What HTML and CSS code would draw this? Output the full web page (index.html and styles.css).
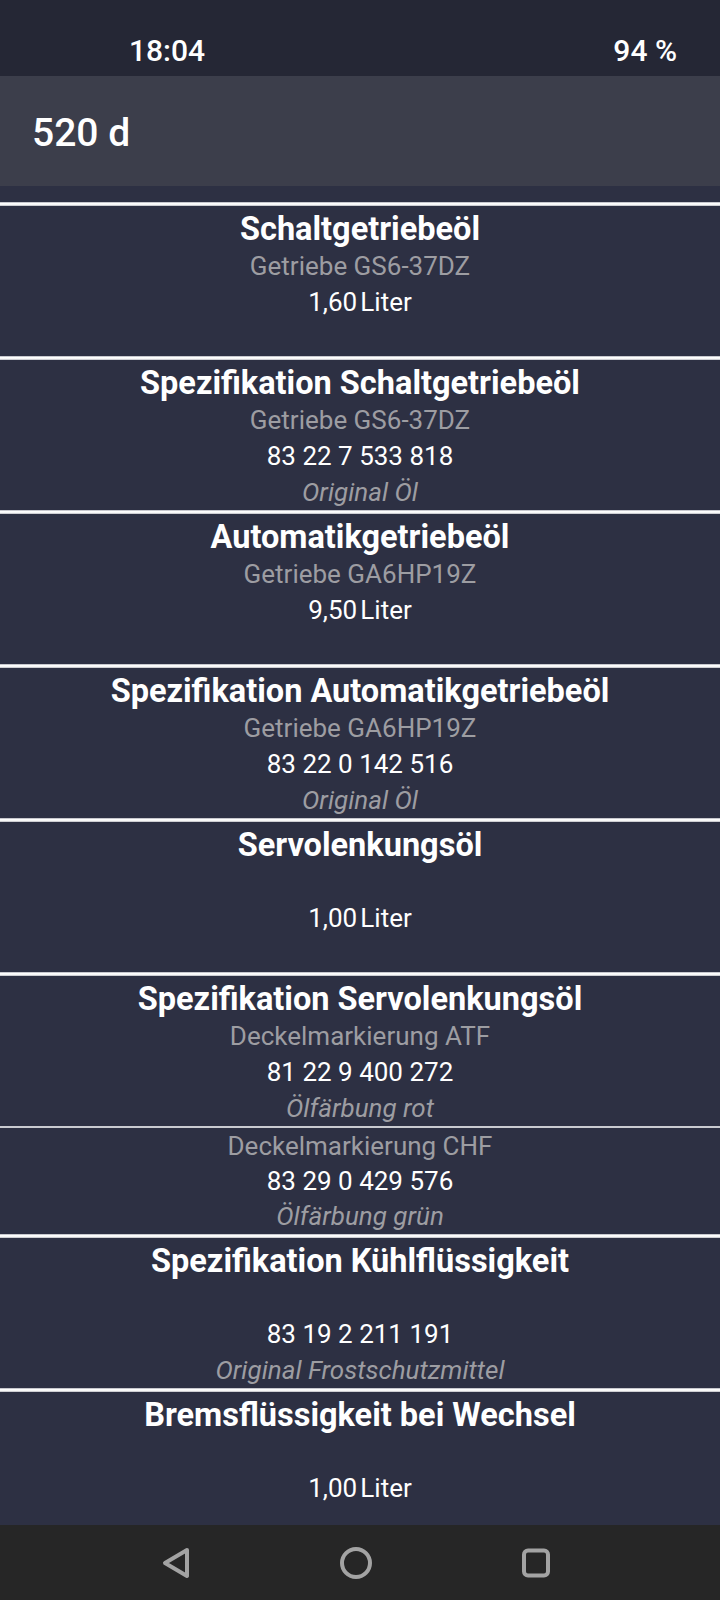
FILE: index.html
```html
<!DOCTYPE html>
<html lang="de">
<head>
    <meta charset="UTF-8">
    <meta name="viewport" content="width=device-width, initial-scale=1.0">
    <title>520 d</title>
    <link rel="stylesheet" href="styles.css">
</head>
<body>
    <div class="statusbar">
        <span class="time">18:04</span>
        <span class="battery">94 %</span>
    </div>
    <div class="appbar">520 d</div>

    <div class="content">
        <div class="sep"></div>
        <div class="card">
            <div class="title">Schaltgetriebeöl</div>
            <div class="sub">Getriebe GS6-37DZ</div>
            <div class="value">1,60&#8239;Liter</div>
            <div class="note"></div>
        </div>
        <div class="sep"></div>
        <div class="card">
            <div class="title">Spezifikation Schaltgetriebeöl</div>
            <div class="sub">Getriebe GS6-37DZ</div>
            <div class="value">83 22 7 533 818</div>
            <div class="note">Original Öl</div>
        </div>
        <div class="sep"></div>
        <div class="card">
            <div class="title">Automatikgetriebeöl</div>
            <div class="sub">Getriebe GA6HP19Z</div>
            <div class="value">9,50&#8239;Liter</div>
            <div class="note"></div>
        </div>
        <div class="sep"></div>
        <div class="card">
            <div class="title">Spezifikation Automatikgetriebeöl</div>
            <div class="sub">Getriebe GA6HP19Z</div>
            <div class="value">83 22 0 142 516</div>
            <div class="note">Original Öl</div>
        </div>
        <div class="sep"></div>
        <div class="card">
            <div class="title">Servolenkungsöl</div>
            <div class="sub"></div>
            <div class="value">1,00&#8239;Liter</div>
            <div class="note"></div>
        </div>
        <div class="sep"></div>
        <div class="card">
            <div class="title">Spezifikation Servolenkungsöl</div>
            <div class="sub">Deckelmarkierung ATF</div>
            <div class="value">81 22 9 400 272</div>
            <div class="note">Ölfärbung rot</div>
        </div>
        <div class="sep thin"></div>
        <div class="card subcard">
            <div class="sub">Deckelmarkierung CHF</div>
            <div class="value">83 29 0 429 576</div>
            <div class="note">Ölfärbung grün</div>
        </div>
        <div class="sep"></div>
        <div class="card">
            <div class="title">Spezifikation Kühlflüssigkeit</div>
            <div class="sub"></div>
            <div class="value">83 19 2 211 191</div>
            <div class="note">Original Frostschutzmittel</div>
        </div>
        <div class="sep"></div>
        <div class="card">
            <div class="title">Bremsflüssigkeit bei Wechsel</div>
            <div class="sub"></div>
            <div class="value">1,00&#8239;Liter</div>
            <div class="note"></div>
        </div>
    </div>

    <div class="navbar">
        <svg width="34" height="34" viewBox="0 0 34 34">
            <path d="M28 4 L6 17 L28 30 Z" fill="none" stroke="#a3a3a3" stroke-width="4" stroke-linejoin="round"/>
        </svg>
        <svg width="34" height="34" viewBox="0 0 34 34">
            <circle cx="17" cy="17" r="14" fill="none" stroke="#a3a3a3" stroke-width="4"/>
        </svg>
        <svg width="34" height="34" viewBox="0 0 34 34">
            <rect x="5" y="4.5" width="24" height="25" rx="4" fill="none" stroke="#a3a3a3" stroke-width="4"/>
        </svg>
    </div>
</body>
</html>
```

FILE: styles.css
```css
body {
    margin: 0;
    width: 720px;
    height: 1600px;
    overflow: hidden;
    font-family: Roboto, "Noto Sans", sans-serif;
    background-color: #2d3043;
    color: white;
    display: flex;
    flex-direction: column;
}
.statusbar {
    height: 76px;
    box-sizing: border-box;
    padding: 24px 43px 0 129px;
    background-color: #252735;
    display: flex;
    align-items: center;
    justify-content: space-between;
    font-size: 30px;
    font-weight: 500;
}
.appbar {
    height: 110px;
    box-sizing: border-box;
    padding: 3px 0 0 32px;
    background-color: #3c3e4b;
    display: flex;
    align-items: center;
    font-size: 39px;
    font-weight: 500;
}
.content {
    flex: 1;
    overflow: hidden;
    padding-top: 16px;
}
.sep {
    height: 4px;
    background: linear-gradient(#9fa0aa, #ffffff 30%, #f4f4f4 75%, #a6a7b0);
}
.sep.thin {
    height: 2px;
    background: #c9cad0;
}
.card {
    padding-top: 4px;
    text-align: center;
}
.card div {
    height: 36px;
    line-height: 36px;
    white-space: nowrap;
}
.card .title {
    height: 38px;
    line-height: 38px;
    font-size: 32.5px;
    font-weight: 700;
}
.card.subcard {
    padding-top: 1px;
}
.card.subcard div {
    height: 35px;
    line-height: 35px;
}
.sub {
    font-size: 26px;
    color: #9d9da2;
}
.value {
    font-size: 26px;
}
.note {
    font-size: 26px;
    font-style: italic;
    color: #9d9da2;
}
.navbar {
    height: 75px;
    flex-shrink: 0;
    box-sizing: border-box;
    padding-right: 8px;
    background-color: #262626;
    display: flex;
    align-items: center;
    justify-content: center;
    gap: 146px;
}
```
